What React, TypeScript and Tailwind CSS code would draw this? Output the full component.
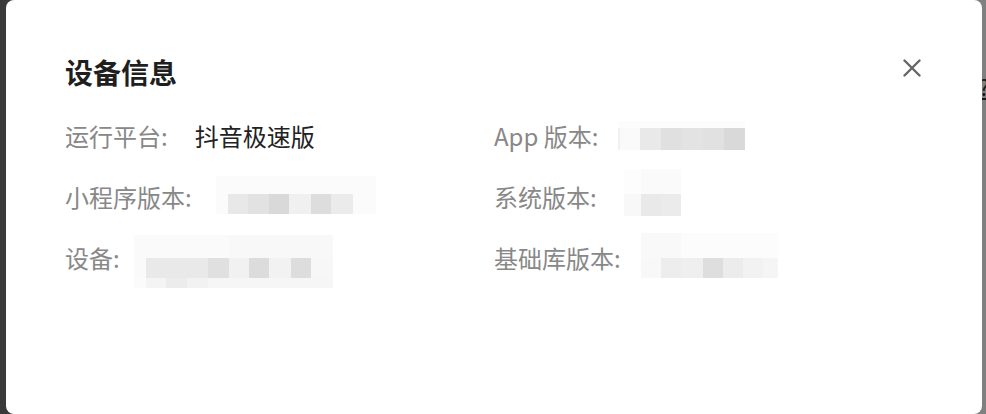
type Cell = { w: string; bg: string };
type MosaicRow = { h: string; cells: Cell[] };

type Field = {
  label: string;
  text?: string;
  gap: string;
  mosaic?: { size: string; rows: MosaicRow[] };
};

// pixelated (blurred out) values
const miniVersion: MosaicRow[] = [
  { h: "h-[18px]", cells: [{ w: "w-[160px]", bg: "bg-[#fbfbfb]" }] },
  {
    h: "h-[20px]",
    cells: [
      { w: "w-[12px]", bg: "bg-[#fbfbfb]" },
      { w: "w-[20px]", bg: "bg-[#e8e8e8]" },
      { w: "w-[21px]", bg: "bg-[#e2e2e2]" },
      { w: "w-[20px]", bg: "bg-[#d9d9d9]" },
      { w: "w-[22px]", bg: "bg-[#f0f0f0]" },
      { w: "w-[20px]", bg: "bg-[#dddddd]" },
      { w: "w-[22px]", bg: "bg-[#ebebeb]" },
      { w: "w-[23px]", bg: "bg-[#fbfbfb]" },
    ],
  },
];

const deviceName: MosaicRow[] = [
  {
    h: "h-[23px]",
    cells: [
      { w: "w-[95px]", bg: "bg-[#fafafa]" },
      { w: "w-[104px]", bg: "bg-[#f8f8f8]" },
    ],
  },
  {
    h: "h-[20px]",
    cells: [
      { w: "w-[12px]", bg: "bg-[#fafafa]" },
      { w: "w-[62px]", bg: "bg-[#e9e9e9]" },
      { w: "w-[21px]", bg: "bg-[#e0e0e0]" },
      { w: "w-[20px]", bg: "bg-[#f1f1f1]" },
      { w: "w-[20px]", bg: "bg-[#dcdcdc]" },
      { w: "w-[22px]", bg: "bg-[#f2f2f2]" },
      { w: "w-[20px]", bg: "bg-[#dddddd]" },
      { w: "w-[22px]", bg: "bg-[#f7f7f7]" },
    ],
  },
  {
    h: "h-[10px]",
    cells: [
      { w: "w-[12px]", bg: "bg-[#fbfbfb]" },
      { w: "w-[20px]", bg: "bg-[#f4f4f4]" },
      { w: "w-[21px]", bg: "bg-[#ececec]" },
      { w: "w-[21px]", bg: "bg-[#f2f2f2]" },
      { w: "w-[125px]", bg: "bg-[#f6f6f6]" },
    ],
  },
];

const appVersion: MosaicRow[] = [
  { h: "h-[7px]", cells: [{ w: "w-[127px]", bg: "bg-[#fcfcfc]" }] },
  {
    h: "h-[22px]",
    cells: [
      { w: "w-[2px]", bg: "bg-[#f0f0f0]" },
      { w: "w-[20px]", bg: "bg-[#fafafa]" },
      { w: "w-[21px]", bg: "bg-[#e9e9e9]" },
      { w: "w-[21px]", bg: "bg-[#e0e0e0]" },
      { w: "w-[21px]", bg: "bg-[#e3e3e3]" },
      { w: "w-[21px]", bg: "bg-[#e1e1e1]" },
      { w: "w-[21px]", bg: "bg-[#d9d9d9]" },
    ],
  },
];

const osVersion: MosaicRow[] = [
  {
    h: "h-[25px]",
    cells: [
      { w: "w-[17px]", bg: "bg-[#fdfdfd]" },
      { w: "w-[40px]", bg: "bg-[#fafafa]" },
    ],
  },
  {
    h: "h-[22px]",
    cells: [
      { w: "w-[17px]", bg: "bg-[#f8f8f8]" },
      { w: "w-[20px]", bg: "bg-[#e9e9e9]" },
      { w: "w-[20px]", bg: "bg-[#ebebeb]" },
    ],
  },
];

const sdkVersion: MosaicRow[] = [
  {
    h: "h-[25px]",
    cells: [
      { w: "w-[40px]", bg: "bg-[#f9f9f9]" },
      { w: "w-[97px]", bg: "bg-[#fcfcfc]" },
    ],
  },
  {
    h: "h-[20px]",
    cells: [
      { w: "w-[20px]", bg: "bg-[#f8f8f8]" },
      { w: "w-[20px]", bg: "bg-[#ededed]" },
      { w: "w-[22px]", bg: "bg-[#efefef]" },
      { w: "w-[20px]", bg: "bg-[#dedede]" },
      { w: "w-[20px]", bg: "bg-[#ececec]" },
      { w: "w-[20px]", bg: "bg-[#f2f2f2]" },
      { w: "w-[15px]", bg: "bg-[#f5f5f5]" },
    ],
  },
];

const left: Field[] = [
  { label: "运行平台:", text: "抖音极速版", gap: "ml-[27px]" },
  { label: "小程序版本:", gap: "ml-[24px] mt-[-4px]", mosaic: { size: "w-[160px]", rows: miniVersion } },
  { label: "设备:", gap: "ml-[14px] mt-[7px]", mosaic: { size: "w-[199px]", rows: deviceName } },
];

const right: Field[] = [
  { label: "App 版本:", gap: "ml-[20px] mt-[-2px]", mosaic: { size: "w-[127px]", rows: appVersion } },
  { label: "系统版本:", gap: "ml-[27px] mt-[-9px]", mosaic: { size: "w-[57px]", rows: osVersion } },
  { label: "基础库版本:", gap: "ml-[20px] mt-[-5px]", mosaic: { size: "w-[137px]", rows: sdkVersion } },
];

function Mosaic({ size, rows }: { size: string; rows: MosaicRow[] }) {
  return (
    <div className={`flex flex-col shrink-0 ${size}`}>
      {rows.map((row, i) => (
        <div key={i} className={`flex ${row.h}`}>
          {row.cells.map((c, j) => (
            <div key={j} className={`h-full shrink-0 ${c.w} ${c.bg}`} />
          ))}
        </div>
      ))}
    </div>
  );
}

function InfoRow({ field }: { field: Field }) {
  return (
    <div className="flex items-center h-[36px] whitespace-nowrap">
      <span className="text-[#888888]">{field.label}</span>
      {field.text ? (
        <span className={`text-[#222222] ${field.gap}`}>{field.text}</span>
      ) : (
        field.mosaic && (
          <div className={field.gap}>
            <Mosaic {...field.mosaic} />
          </div>
        )
      )}
    </div>
  );
}

export default function App() {
  return (
    <div
      className="flex h-[414px] w-full overflow-hidden bg-[linear-gradient(to_right,#3a3a3a_50%,#808080_50%)]"
      style={{ fontFamily: '"Noto Sans CJK SC", "Noto Sans", sans-serif' }}
    >
      {/* dimmed sidebar behind the overlay */}
      <div className="w-[6px] shrink-0" />

      {/* MODAL */}
      <div className="w-[976px] shrink-0 h-full bg-white rounded-[8px] pl-[59px] pr-[61px] pt-[54px]">
        <div className="flex items-start justify-between">
          <h2 className="text-[28px] leading-[36px] font-bold text-[#1f1f1f]">设备信息</h2>
          <button className="mt-[5px] text-[#666666]">
            <svg width="18" height="18" viewBox="0 0 18 18" fill="none" stroke="currentColor" strokeWidth="2.4" strokeLinecap="round">
              <path d="M1.5 1.5 16.5 16.5M16.5 1.5 1.5 16.5" />
            </svg>
          </button>
        </div>

        <div className="grid grid-cols-[429px_1fr] mt-[28px] text-[24px] leading-[36px]">
          <div className="flex flex-col gap-[25px]">
            {left.map(f => (
              <InfoRow key={f.label} field={f} />
            ))}
          </div>
          <div className="flex flex-col gap-[25px]">
            {right.map(f => (
              <InfoRow key={f.label} field={f} />
            ))}
          </div>
        </div>
      </div>

      {/* page content peeking out on the right */}
      <div className="flex-1 overflow-hidden">
        <div className="mt-[74px] -ml-[3px] text-[22px] leading-[24px] text-[#1a1a1a] underline">?</div>
      </div>
    </div>
  );
}
